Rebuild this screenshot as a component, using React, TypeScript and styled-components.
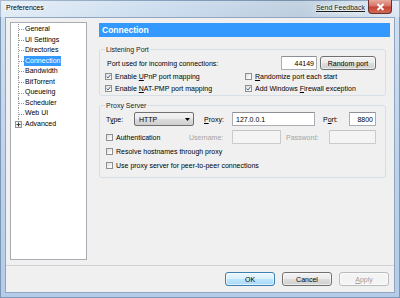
import React from 'react';
import styled, { createGlobalStyle } from 'styled-components';

const GlobalStyle = createGlobalStyle`
html, body {
  margin: 0;
  padding: 0;
}
body {
  width: 400px;
  height: 298px;
  overflow: hidden;
  font-family: "Liberation Sans", Arial, sans-serif;
  font-size: 7px;
  color: #000;
}
`;

const Window = styled.div`
display: flex;
flex-direction: column;
width: 400px;
height: 298px;
box-sizing: border-box;
background: linear-gradient(to bottom, #dbe7f4 0%, #cddef0 8%, #bcd2ea 60%, #b4cce8 100%);
box-shadow: inset 0 0 0 1px #7d96b6;
`;

const TitleBar = styled.div`
display: flex;
align-items: flex-start;
height: 17px;
padding: 0 8px 0 6px;
background: linear-gradient(90deg, rgba(255,255,255,0.35) 0%, rgba(170,200,225,0.2) 40%, rgba(90,120,140,0.18) 75%, rgba(255,255,255,0.25) 100%);
`;

const Title = styled.div`
margin-top: 3px;
line-height: 10px;
text-shadow: 0 0 5px #fff, 0 0 3px #fff;
`;

const Spacer = styled.div`
flex: 1;
`;

const FeedbackLink = styled.a`
margin: 3px 3px 0 0;
line-height: 10px;
color: #1b1b1b;
text-decoration: underline;
text-shadow: 0 0 5px #fff, 0 0 3px #fff;
`;

const CloseButton = styled.div`
display: flex;
align-items: center;
justify-content: center;
width: 24px;
height: 14px;
box-sizing: border-box;
border: 1px solid #6e2f2a;
border-top: none;
border-radius: 0 0 4px 4px;
background: linear-gradient(to bottom, #e9a99b 0%, #d7766a 45%, #c44536 55%, #d06a55 100%);
`;

const Client = styled.div`
display: flex;
flex-direction: column;
flex: 1;
min-height: 0;
margin: 0 5px 5px 5px;
border: 1px solid #8fa5c0;
background: #f0f0f0;
`;

const Main = styled.div`
display: flex;
flex: 1;
min-height: 0;
padding: 4px 4px 5px 4px;
`;

const Tree = styled.ul`
width: 78px;
box-sizing: border-box;
margin: 0;
padding: 1px 0 0 0;
list-style: none;
border: 1px solid #a9adb3;
background: #fff;
`;

const TreeItem = styled.li<{ $last?: boolean }>`
position: relative;
height: 10.55px;
line-height: 10.55px;
padding-left: 13px;

&::before {
  content: "";
  position: absolute;
  left: 8px;
  top: 50%;
  width: 5px;
  border-top: 1px dotted #9a9a9a;
}

&::after {
  content: "";
  position: absolute;
  left: 7px;
  top: 0;
  height: ${(p) => (p.$last ? '50%' : '100%')};
  border-left: 1px dotted #9a9a9a;
}
`;

const TreeLabel = styled.span<{ $selected?: boolean }>`
display: inline-block;
padding: 0 1px;
background: ${(p) => (p.$selected ? '#3399ff' : 'transparent')};
color: ${(p) => (p.$selected ? '#fff' : '#000')};
`;

const Expander = styled.span`
position: absolute;
z-index: 1;
left: 4px;
top: calc(50% - 3px);
width: 7px;
height: 7px;
box-sizing: border-box;
border: 1px solid #959595;
background: linear-gradient(135deg, #fff, #e6e6e6);
display: flex;
align-items: center;
justify-content: center;
`;

const Panel = styled.div`
display: flex;
flex-direction: column;
flex: 1;
margin: 1px 0 0 12px;
`;

const Header = styled.div`
height: 14px;
line-height: 14px;
padding-left: 3px;
background: #3399ff;
color: #fff;
font-size: 8.5px;
font-weight: bold;
`;

const Group = styled.fieldset<{ $gap: number; $bottom: number }>`
margin: ${(p) => p.$gap}px 4px 0 0;
padding: 0 9px ${(p) => p.$bottom}px 5px;
min-width: 0;
border: 1px solid #d5dfe5;
border-radius: 3px;
`;

const GroupTitle = styled.legend`
padding: 0 1px;
line-height: 9px;
font-size: 7px;
color: #1e1e1e;
`;

const PortRow = styled.div`
display: flex;
align-items: center;
gap: 3px;
height: 14px;
margin-top: 2px;
`;

const RowLabel = styled.span<{ $width?: number; $gap?: number; $disabled?: boolean }>`
flex: ${(p) => (p.$width ? 'none' : '1')};
width: ${(p) => (p.$width ? `${p.$width}px` : 'auto')};
margin-left: ${(p) => p.$gap ?? 0}px;
color: ${(p) => (p.$disabled ? '#a3a3a3' : '#000')};
white-space: nowrap;
`;

const TextBox = styled.input<{ $width: number; $right?: boolean; $disabled?: boolean }>`
width: ${(p) => p.$width}px;
height: 14px;
box-sizing: border-box;
margin: 0;
padding: 0 ${(p) => (p.$right ? '2px' : '3px')};
border: 1px solid ${(p) => (p.$disabled ? '#cbcbcb' : '#abadb3')};
border-top-color: ${(p) => (p.$disabled ? '#c4c4c4' : '#8e9096')};
border-radius: 1px;
background: ${(p) => (p.$disabled ? '#f4f4f4' : '#fff')};
font: inherit;
font-size: 7px;
color: #000;
text-align: ${(p) => (p.$right ? 'right' : 'left')};
outline: none;
`;

const Button = styled.button<{ $width: number; $variant?: 'default' | 'disabled' }>`
width: ${(p) => p.$width}px;
height: 14px;
box-sizing: border-box;
margin: 0;
padding: 0;
font: inherit;
font-size: 7px;
border-radius: 3px;
border: 1px solid ${(p) => (p.$variant === 'default' ? '#3c7fb1' : p.$variant === 'disabled' ? '#b8bcbf' : '#707070')};
color: ${(p) => (p.$variant === 'disabled' ? '#a0a0a0' : '#000')};
background: ${(p) =>
  p.$variant === 'default'
    ? 'linear-gradient(to bottom, #eaf6fd 0%, #d9f0fc 50%, #bee6fd 51%, #a7d9f5 100%)'
    : p.$variant === 'disabled'
    ? '#f4f4f4'
    : 'linear-gradient(to bottom, #f2f2f2 0%, #ebebeb 50%, #dddddd 51%, #cfcfcf 100%)'};
box-shadow: inset 0 0 0 1px rgba(255,255,255,0.6);
`;

const CheckGrid = styled.div`
display: grid;
grid-template-columns: 140px 1fr;
grid-auto-rows: 12px;
`;

const CheckRow = styled.label<{ $height?: number; $width?: number }>`
display: flex;
align-items: center;
gap: 3px;
height: ${(p) => p.$height ?? 12}px;
width: ${(p) => (p.$width ? `${p.$width}px` : 'auto')};
white-space: nowrap;
`;

const Box = styled.span`
display: flex;
align-items: center;
justify-content: center;
width: 7px;
height: 7px;
box-sizing: border-box;
border: 1px solid #8e8f8f;
background: linear-gradient(135deg, #dcdcdc 0%, #f4f4f4 60%, #fff 100%);
`;

const FieldRow = styled.div<{ $gap?: number }>`
display: flex;
align-items: center;
height: 14px;
margin-top: ${(p) => p.$gap ?? 0}px;
padding-left: 1px;
`;

const Combo = styled.div`
display: flex;
align-items: center;
width: 60px;
height: 14px;
box-sizing: border-box;
padding: 0 3px 0 4px;
border: 1px solid #707070;
border-radius: 2px;
background: linear-gradient(to bottom, #f2f2f2 0%, #ebebeb 50%, #dddddd 51%, #cfcfcf 100%);
`;

const Footer = styled.div`
display: flex;
justify-content: flex-end;
gap: 7px;
padding: 6px 5px;
border-top: 1px solid #d2d2d2;
`;

const Check = ({ checked, children }: { checked?: boolean; children: React.ReactNode }) => (
  <>
    <Box>
      {checked && (
        <svg width="5" height="5" viewBox="0 0 5 5">
          <path d="M0.6 2.6 L2 4 L4.5 0.8" fill="none" stroke="#4a5f8f" strokeWidth="1" />
        </svg>
      )}
    </Box>
    <span>{children}</span>
  </>
);

const treeItems = ['General', 'UI Settings', 'Directories', 'Connection', 'Bandwidth', 'BitTorrent', 'Queueing', 'Scheduler', 'Web UI', 'Advanced'];

const App = () => {
  return (
    <>
      <GlobalStyle />
      <Window>
        <TitleBar>
          <Title>Preferences</Title>
          <Spacer />
          <FeedbackLink>Send Feedback</FeedbackLink>
          <CloseButton>
            <svg width="9" height="8" viewBox="0 0 9 8">
              <path d="M1.5 1 L7.5 7 M7.5 1 L1.5 7" stroke="#fff" strokeWidth="1.8" />
            </svg>
          </CloseButton>
        </TitleBar>

        <Client>
          <Main>
            <Tree>
              {treeItems.map((name, i) => {
                const last = i === treeItems.length - 1;
                return (
                  <TreeItem key={name} $last={last}>
                    {last && (
                      <Expander>
                        <svg width="5" height="5" viewBox="0 0 5 5">
                          <path d="M0.5 2.5 H4.5 M2.5 0.5 V4.5" stroke="#3a3a3a" strokeWidth="1" />
                        </svg>
                      </Expander>
                    )}
                    <TreeLabel $selected={name === 'Connection'}>{name}</TreeLabel>
                  </TreeItem>
                );
              })}
            </Tree>

            <Panel>
              <Header>Connection</Header>

              <Group $gap={8} $bottom={1}>
                <GroupTitle>Listening Port</GroupTitle>
                <PortRow>
                  <RowLabel $gap={2}>Port used for incoming connections:</RowLabel>
                  <TextBox $width={36} $right readOnly value="44149" />
                  <Button $width={56}>Random port</Button>
                </PortRow>
                <CheckGrid>
                  <CheckRow><Check checked>Enable <u>U</u>PnP port mapping</Check></CheckRow>
                  <CheckRow><Check><u>R</u>andomize port each start</Check></CheckRow>
                  <CheckRow><Check checked>Enable <u>N</u>AT-PMP port mapping</Check></CheckRow>
                  <CheckRow><Check checked>Add Windows <u>F</u>irewall exception</Check></CheckRow>
                </CheckGrid>
              </Group>

              <Group $gap={5} $bottom={5}>
                <GroupTitle>Proxy Server</GroupTitle>
                <FieldRow $gap={2}>
                  <RowLabel $width={28}>T<u>y</u>pe:</RowLabel>
                  <Combo>
                    <Spacer>HTTP</Spacer>
                    <svg width="5" height="3" viewBox="0 0 5 3">
                      <path d="M0 0 H5 L2.5 3 Z" fill="#000" />
                    </svg>
                  </Combo>
                  <RowLabel $width={28} $gap={10}><u>P</u>roxy:</RowLabel>
                  <TextBox $width={83} readOnly value="127.0.0.1" />
                  <RowLabel $width={26} $gap={8}>P<u>o</u>rt:</RowLabel>
                  <TextBox $width={27} $right readOnly value="8800" />
                </FieldRow>
                <FieldRow $gap={4}>
                  <CheckRow $height={14} $width={83}><Check>Authentication</Check></CheckRow>
                  <RowLabel $width={43} $disabled>Username:</RowLabel>
                  <TextBox $width={49} $disabled readOnly value="" />
                  <RowLabel $width={43} $gap={5} $disabled>Password:</RowLabel>
                  <TextBox $width={47} $disabled readOnly value="" />
                </FieldRow>
                <FieldRow>
                  <CheckRow $height={14}><Check>Resolve hostnames through proxy</Check></CheckRow>
                </FieldRow>
                <FieldRow>
                  <CheckRow $height={14}><Check>Use proxy server for peer-to-peer connections</Check></CheckRow>
                </FieldRow>
              </Group>
            </Panel>
          </Main>

          <Footer>
            <Button $width={50} $variant="default">OK</Button>
            <Button $width={50}>Cancel</Button>
            <Button $width={50} $variant="disabled"><u>A</u>pply</Button>
          </Footer>
        </Client>
      </Window>
    </>
  );
};

export default App;
